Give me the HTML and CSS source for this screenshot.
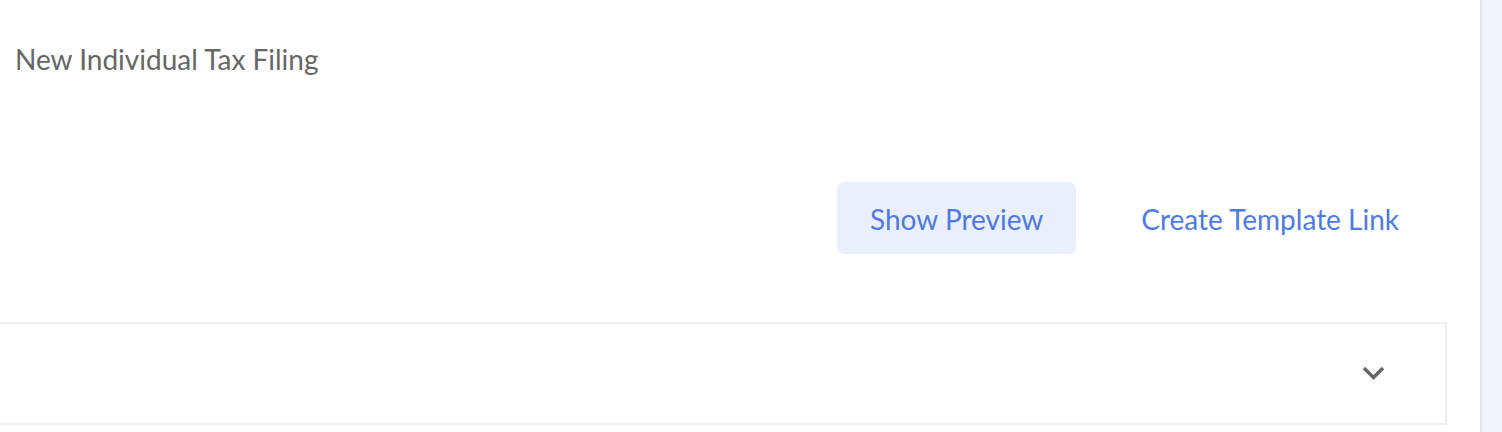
FILE: index.html
```html
<!DOCTYPE html>
<html>
<head>
<meta charset="utf-8">
<link rel="stylesheet" href="styles.css">
</head>
<body>
<div class="layout">
  <main class="main">
    <header class="head">
      <h1 class="title">New Individual Tax Filing</h1>
    </header>
    <div class="actions">
      <button class="btn btn-soft">Show Preview</button>
      <button class="btn btn-link">Create Template Link</button>
    </div>
    <section class="card">
      <svg class="chev" width="23" height="14" viewBox="0 0 23 14" aria-hidden="true">
        <path d="M2 2 L11.5 11.5 L21 2" fill="none" stroke="#666" stroke-width="3.4" stroke-linecap="butt" stroke-linejoin="miter"/>
      </svg>
    </section>
  </main>
  <aside class="rail"></aside>
</div>
</body>
</html>
```
FILE: styles.css
```css
html, body {
  margin: 0;
  padding: 0;
  background: #fff;
}
body {
  font-family: Lato, "Open Sans", sans-serif;
  width: 1502px;
  height: 432px;
  overflow: hidden;
}
.layout {
  display: flex;
  height: 432px;
}
.main {
  flex: 1;
  display: flex;
  flex-direction: column;
  min-width: 0;
}
.head {
  padding: 41px 0 0 15px;
  height: 140px;
  box-sizing: border-box;
}
.title {
  margin: 0;
  font-weight: 400;
  font-size: 28px;
  line-height: 36px;
  color: #666;
}
.actions {
  display: flex;
  justify-content: flex-end;
  gap: 32px;
  padding-right: 48px;
  margin-top: 42px;
}
.btn {
  font-family: inherit;
  font-size: 28px;
  border: none;
  border-radius: 7px;
  height: 72px;
  padding: 2px 33px 0;
  color: #4f7ae3;
  cursor: pointer;
}
.btn-soft {
  background: #ebeffb;
}
.btn-link {
  background: transparent;
}
.card {
  margin: 68px 33px 0 -10px;
  height: 103px;
  border: 2px solid #eeeeee;
  box-sizing: border-box;
  display: flex;
  align-items: center;
  justify-content: flex-end;
  padding-right: 60px;
}
.chev {
  display: block;
  margin-top: -2px;
}
.rail {
  width: 20px;
  border-left: 2px solid #e3e5ee;
  background: #f3f4f9;
}
```
